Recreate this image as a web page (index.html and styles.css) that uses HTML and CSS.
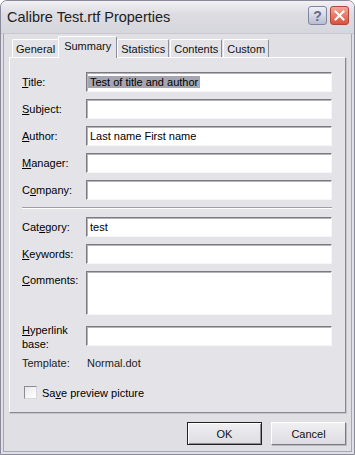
FILE: index.html
```html
<!DOCTYPE html>
<html>
<head>
  <title>Calibre Test.rtf Properties</title>
  <link rel="stylesheet" href="styles.css">
</head>
<body>

<div class="window">
  <div class="titlebar">
    <span class="title">Calibre Test.rtf Properties</span>
    <div class="caption-buttons">
      <span class="cbtn help">?</span>
      <span class="cbtn close">
        <svg width="11" height="11" viewBox="0 0 11 11">
          <path d="M1.5 1.5 L9.5 9.5 M9.5 1.5 L1.5 9.5" stroke="#fff" stroke-width="2" stroke-linecap="square"/>
        </svg>
      </span>
    </div>
  </div>

  <div class="frame">
    <div class="tabs">
      <div class="tab">General</div>
      <div class="tab selected">Summary</div>
      <div class="tab">Statistics</div>
      <div class="tab">Contents</div>
      <div class="tab">Custom</div>
    </div>

    <div class="panel">
      <div class="row">
        <label><u>T</u>itle:</label>
        <div class="field"><span class="selection">Test of title and author</span></div>
      </div>
      <div class="row">
        <label><u>S</u>ubject:</label>
        <div class="field"></div>
      </div>
      <div class="row">
        <label><u>A</u>uthor:</label>
        <div class="field">Last name First name</div>
      </div>
      <div class="row">
        <label><u>M</u>anager:</label>
        <div class="field"></div>
      </div>
      <div class="row">
        <label>C<u>o</u>mpany:</label>
        <div class="field"></div>
      </div>

      <div class="separator"></div>

      <div class="row">
        <label>Cat<u>e</u>gory:</label>
        <div class="field">test</div>
      </div>
      <div class="row">
        <label><u>K</u>eywords:</label>
        <div class="field"></div>
      </div>
      <div class="row top">
        <label><u>C</u>omments:</label>
        <div class="field comments"></div>
      </div>
      <div class="row top hyperlink">
        <label><span><u>H</u>yperlink</span><span>base:</span></label>
        <div class="field"></div>
      </div>
      <div class="row info">
        <label>Template:</label>
        <span>Normal.dot</span>
      </div>

      <div class="check">
        <span class="box"></span>
        <span>Sa<u>v</u>e preview picture</span>
      </div>
    </div>

    <div class="actions">
      <button class="default">OK</button>
      <button>Cancel</button>
    </div>
  </div>
</div>

</body>
</html>
```

FILE: styles.css
```css
body {
  margin: 0;
  font-family: "Liberation Sans", Arial, sans-serif;
  font-size: 11px;
  color: #000;
  background: #fff;
}

.window {
  width: 355px;
  height: 455px;
  box-sizing: border-box;
  border: 1px solid #8a8a9c;
  border-radius: 7px 7px 0 0;
  background: #e0dfe3;
  display: flex;
  flex-direction: column;
}

.titlebar {
  height: 32px;
  display: flex;
  align-items: center;
  justify-content: space-between;
  padding: 0 5px 0 6px;
  border-radius: 6px 6px 0 0;
  background: linear-gradient(to bottom, #f2f2f5, #dcdce2 40%, #d6d6dd);
  border-bottom: 1px solid #c8c8d2;
}

.title {
  font-size: 14.5px;
  color: #222;
  padding-bottom: 1px;
}

.caption-buttons {
  display: flex;
  gap: 3px;
  margin-top: -3px;
}

.cbtn {
  width: 19px;
  height: 19px;
  box-sizing: border-box;
  border-radius: 3px;
  display: flex;
  align-items: center;
  justify-content: center;
}

.help {
  border: 1px solid #8186a0;
  background: linear-gradient(to bottom, #eef0f8, #b9bdd2);
  color: #676b85;
  font-weight: bold;
  font-size: 14px;
}

.close {
  border: 1px solid #b0463a;
  background: linear-gradient(to bottom, #f4a898, #d8513c);
}

.frame {
  flex: 1;
  margin: 0 2px 2px;
  border: 1px solid #a6a6b6;
  border-top: none;
  padding: 2px 5px 6px;
  display: flex;
  flex-direction: column;
}

.tabs {
  display: flex;
  align-items: flex-end;
  height: 21px;
  padding-left: 3px;
  position: relative;
  z-index: 1;
}

.tab {
  height: 18px;
  line-height: 18px;
  padding: 0 3px;
  margin-right: 1px;
  box-sizing: border-box;
  border: 1px solid #fff;
  border-bottom: none;
  border-right-color: #8c8c98;
  border-radius: 2px 2px 0 0;
  background: #e3e3e7;
  color: #111;
}

.tab.selected {
  height: 22px;
  line-height: 19px;
  margin: 0 -1px -1px -2px;
  padding: 0 5px;
  background: #e4e4e8;
}

.tab.selected + .tab {
  margin-left: 1px;
}

.panel {
  border: 1px solid #fff;
  border-right-color: #8a8a96;
  border-bottom-color: #8a8a96;
  box-shadow: 1px 1px 0 #c4c4cc;
  background: #e4e4e8;
  padding: 14px 13px 13px 12px;
}

.row {
  display: flex;
  align-items: center;
  margin-bottom: 7px;
}

.row label {
  width: 64px;
  flex: none;
}

.row.top {
  align-items: flex-start;
}

.row.top label {
  padding-top: 3px;
}

.row.hyperlink {
  margin-top: 11px;
  margin-bottom: 0;
}

.row.hyperlink label {
  padding-top: 0;
  margin-top: -2px;
  display: flex;
  flex-direction: column;
}

.row.hyperlink label span {
  height: 14px;
  line-height: 13px;
}

.field {
  flex: 1;
  height: 20px;
  box-sizing: border-box;
  border: 1px solid;
  border-color: #7a7a80 #f6f6f8 #f6f6f8 #7a7a80;
  box-shadow: inset 1px 1px 0 #b4b4ba;
  background: #fff;
  padding: 0 3px;
  line-height: 18px;
  white-space: nowrap;
}

.field.comments {
  height: 44px;
}

.selection {
  background: #a6a6b2;
  margin-left: -2px;
  padding: 0 2px;
}

.separator {
  border-top: 1px solid #a0a0aa;
  border-bottom: 1px solid #fff;
  margin: 4px 0 8px;
  height: 0;
}

.row.info {
  margin: 4px 0 0;
  height: 14px;
  color: #222;
}

.row.info span {
  margin-left: 1px;
}

.check {
  display: flex;
  align-items: center;
  gap: 5px;
  margin-top: 16px;
  padding-left: 2px;
}

.check .box {
  width: 13px;
  height: 13px;
  box-sizing: border-box;
  border: 1px solid;
  border-color: #8a8a90 #d8d8dc #d8d8dc #8a8a90;
  background: linear-gradient(135deg, #e8e8ea, #fff);
}

.actions {
  display: flex;
  justify-content: flex-end;
  gap: 9px;
  margin-top: 9px;
}

button {
  width: 75px;
  height: 23px;
  font-family: "Liberation Sans", Arial, sans-serif;
  font-size: 11px;
  color: #111;
  border: 1px solid;
  border-color: #fff #7c7c84 #7c7c84 #fff;
  box-shadow: 1px 1px 0 #b8b8c0;
  background: linear-gradient(to bottom, #f0f0f2, #dcdce2);
  padding: 0;
}

button.default {
  border: 1px solid #222;
  box-shadow: inset 1px 1px 0 #fff, inset -1px -1px 0 #8c8c94;
}
```
